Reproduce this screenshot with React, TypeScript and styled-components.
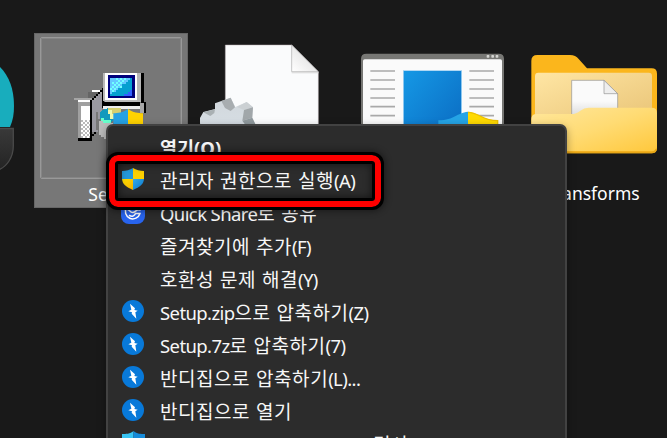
import React from 'react';
import styled, { createGlobalStyle } from 'styled-components';

const GlobalStyle = createGlobalStyle`
  * { box-sizing: border-box; }
  body { margin: 0; background: #191919; overflow: hidden; }
`;

const Desktop = styled.main`
  position: relative;
  width: 667px;
  height: 438px;
  overflow: hidden;
  display: flex;
  align-items: flex-start;
  padding-top: 33px;
  background: #191919;
  font-family: 'Noto Sans', 'Noto Sans CJK KR', sans-serif;
  color: #fff;
`;

const FileTile = styled.div<{ $width: number; $selected?: boolean }>`
  flex: none;
  width: ${p => p.$width}px;
  height: 175px;
  display: flex;
  flex-direction: column;
  align-items: center;
  background: ${p => (p.$selected ? '#777' : 'transparent')};
  border: ${p => (p.$selected ? '1px solid #666' : '0')};
  padding-top: ${p => (p.$selected ? '3px' : '0')};
  margin-right: ${p => (p.$selected ? '2px' : '0')};
  svg { display: block; flex: none; }
`;

const Thumb = styled.div`
  width: 142px;
  height: 142px;
  border: 1px solid #999;
  outline: 1px solid #858585;
  outline-offset: -2px;
  border-radius: 2px;
  padding: 24px 0 0 27px;
`;

const FileName = styled.span<{ $top: number; $shift?: number }>`
  margin-top: ${p => p.$top}px;
  margin-left: ${p => p.$shift ?? 0}px;
  font-size: 17.5px;
  line-height: 24px;
  white-space: nowrap;
`;

const Menu = styled.nav`
  position: absolute;
  left: 106px;
  top: 124px;
  width: 461px;
  height: 360px;
  padding-top: 5px;
  background: #2c2c2c;
  border: 2px solid #424242;
  border-radius: 7px;
  box-shadow: 0 3px 8px rgba(0, 0, 0, 0.35);
`;

const MenuRow = styled.div`
  height: 33.1px;
  display: grid;
  grid-template-columns: 52px 1fr;
  align-items: center;
`;

const MenuIcon = styled.span`
  display: flex;
  justify-content: center;
  width: 24px;
  margin-left: 13px;
  margin-top: -4px;
`;

const MenuLabel = styled.span<{ $bold?: boolean; $indent?: number }>`
  font-size: 18.5px;
  line-height: 32px;
  font-weight: ${p => (p.$bold ? 700 : 400)};
  letter-spacing: ${p => (p.$bold ? 0 : -0.6)}px;
  padding-left: ${p => p.$indent ?? 0}px;
  color: #f7f7f7;
  white-space: nowrap;
`;

const Hangul = styled.span<{ $bold?: boolean }>`
  font-size: ${p => (p.$bold ? 18.5 : 19)}px;
  letter-spacing: ${p => (p.$bold ? 0 : 0.55)}px;
  word-spacing: 0.4px;
`;

const Highlight = styled.div`
  position: absolute;
  left: 1px;
  top: 29px;
  width: 272px;
  height: 52px;
  border: 6px solid #f00;
  border-radius: 9px;
  outline: 3px solid #000;
  box-shadow: inset 0 0 0 3px #000, inset 0 0 9px 3px rgba(0, 0, 0, 0.6), 0 0 7px 4px rgba(0, 0, 0, 0.45);
`;

const Shield = () => (
  <svg width="24" height="24" viewBox="0 0 24 24">
    <defs>
      <linearGradient id="shBlue" x1="0" y1="0" x2="1" y2="1"><stop stopColor="#35aae8" /><stop offset="1" stopColor="#0875cd" /></linearGradient>
      <linearGradient id="shGold" x1="0" y1="0" x2="1" y2="1"><stop stopColor="#ffe000" /><stop offset="1" stopColor="#f6b000" /></linearGradient>
    </defs>
    <path d="M12 1C9 3 5 4 1 4V12H12Z" fill="#2499da" />
    <path d="M12 1C15 3 19 4 23 4V12H12Z" fill="#fdd000" />
    <path d="M1 12C1.4 17 5 20 12 23V12Z" fill="url(#shGold)" />
    <path d="M23 12C22.6 17 19 20 12 23V12Z" fill="url(#shBlue)" />
  </svg>
);

const QuickShare = () => (
  <svg width="24" height="24" viewBox="0 0 24 24">
    <rect width="24" height="24" rx="8" fill="#2864ee" />
    <g fill="none" stroke="#fff" strokeWidth="1.5" strokeLinecap="round">
      <path d="M16.5 5.5A7.5 7.5 0 1 0 19 13.5H14.5" />
      <path d="M5 9C8 8 9 13 12 12.5S15 9 19 10" />
      <path d="M8.5 15.5C11 17 13.5 16 14.5 13.5" />
    </g>
  </svg>
);

const Bolt = () => (
  <svg width="22" height="22" viewBox="0 0 66 66">
    <circle cx="33" cy="33" r="33" fill="#0879d9" />
    <path d="M24 11L39 25L37 30L47 32L40 37L43 56L29 41L30 37L19 34L28 29Z" fill="#fff" />
  </svg>
);

const ScanShield = () => (
  <svg width="23" height="24" viewBox="0 0 23 24">
    <path d="M11.5 0C8 3 4 3 0 3V12C1 18 5 22 11.5 24Z" fill="#38c4f3" />
    <path d="M11.5 0C15 3 19 3 23 3V12C22 18 18 22 11.5 24Z" fill="#168bd9" />
  </svg>
);

const Globe = () => (
  <svg width="34" height="142" viewBox="0 0 34 142">
    <defs><linearGradient id="base" x1="0" y1="0" x2="0" y2="1"><stop stopColor="#393939" /><stop offset="1" stopColor="#242424" /></linearGradient></defs>
    <path d="M0 34C9 43 14 56 14 73C14 81 13 87 10 94H0Z" fill="#18adbd" />
    <path d="M-2 95.5H13.3V113C13.3 124 7 134 -2 137Z" fill="url(#base)" stroke="#4a4a4a" strokeWidth="1.3" />
  </svg>
);

const checker = (x0: number, y0: number, cols: number, rows: number, color: string) =>
  Array.from({ length: cols * rows }, (_, i) => {
    const c = i % cols;
    const r = Math.floor(i / cols);
    return (c + r) % 2 ? null : <rect key={i} x={x0 + c * 6} y={y0 + r * 6} width="6" height="6" fill={color} />;
  });

const SetupIcon = () => (
  <svg width="80" height="80" viewBox="0 0 240 240">
    <g shapeRendering="crispEdges">
      <path d="M18 108H60V90H72V84H102V96H84V114H18Z" fill="#a5a5a5" />
      <path d="M60 90H96V96H84V102H78V108H60Z" fill="#656565" />
      <path d="M72 84H96V90H72Z" fill="#fff" />
      <rect x="30" y="114" width="36" height="6" fill="#fff" />
      <path d="M30 120H66V234H30Z" fill="#a0a0a0" />
      <path d="M39 132H66V229H39Z" fill="#fff" />
      {checker(39, 173, 5, 9, '#b9b9b9')}
      <path d="M72 114H84V102H90V96H102V172H90V210H72Z" fill="#9998a0" />
      <path d="M66 114H72V108H78V102H84V96H90V90H96V84H102V78H108V138H102V90H96V96H90V102H84V108H78V114H72V228H66Z" fill="#000" />
      <path d="M72 216H78V210H84V216H78V222H72V236H30V228H66V216Z" fill="#000" />
      <rect x="84" y="150" width="6" height="54" fill="#777" />
      <rect x="105" y="33" width="5" height="84" fill="#b9b9b9" />
      <rect x="110" y="33" width="97" height="81" fill="#fff" />
      <rect x="207" y="33" width="11" height="86" fill="#b6b6b6" />
      <rect x="110" y="113" width="97" height="7" fill="#bbb" />
      <rect x="218" y="33" width="9" height="89" fill="#000" />
      <rect x="120" y="38" width="80" height="70" fill="#00007c" />
      <rect x="126" y="48" width="66" height="54" fill="#05a0d0" />
      <path d="M126 48H186V54H180V60H174V66H162V72H156V78H150V84H144V90H132V96H126Z" fill="#62c8ff" />
      {checker(144, 48, 5, 2, '#70ffff')}
      {checker(132, 60, 5, 3, '#70ffff')}
      {checker(126, 78, 3, 2, '#70ffff')}
      <path d="M192 84V102H168V96H180V90H186V84Z" fill="#3261ff" />
      <path d="M105 120H216V126H222V120H234V154H228V132H105Z" fill="#000" />
      <rect x="216" y="122" width="12" height="30" fill="#a8a8a8" />
      <path d="M105 132H216V141H105Z" fill="#eee" />
      <path d="M96 150L108 142L124 138H158V170H138L128 184H104L96 168Z" fill="#1299bd" />
      <path d="M120 138H160V158H138V164H132V150H120Z" fill="#d5cf70" />
      <path d="M120 144H132V156H138V170H126V156H120Z" fill="#eff9ad" />
      <path d="M98 168H108V174H130V182H104V176H98Z" fill="#68ffcc" />
      <path d="M92 176H104V184H136V232H108V224H98V218H92Z" fill="#bcbcbc" />
    </g>
    <path d="M180 141C164 153 150 153 136 154V215H180Z" fill="#26a2e4" />
    <path d="M180 141C196 153 210 153 225 154V215H180Z" fill="#ffd200" />
  </svg>
);

const ConfigFile = () => (
  <svg width="160" height="110" viewBox="0 9 480 330">
    <defs>
      <linearGradient id="fold" x1="0" y1="1" x2="1" y2="0"><stop stopColor="#fff" /><stop offset="1" stopColor="#d5d5d5" /></linearGradient>
      <linearGradient id="gear" x1="0" y1="0" x2="0" y2="1"><stop stopColor="#d1d7dc" /><stop offset="1" stopColor="#d9e1e7" /></linearGradient>
    </defs>
    <path d="M106 45H305L385 125V339H106Z" fill="#fafbfc" stroke="#b9aeb0" strokeWidth="1.5" />
    <path d="M305 45L385 125H305Z" fill="url(#fold)" stroke="#aaa" strokeWidth="2" />
    <path d="M305 128H385" stroke="#ddd" strokeWidth="4" />
    <path d="M30 264L40 246L75 237V220L122 203L136 231L170 216L189 232L186 264L200 290V330H42L30 280Z" fill="url(#gear)" />
    <path d="M94 213L122 203L135 232L122 243L105 234Z" fill="#a8adb0" />
    <path d="M40 247L75 238L73 249L61 258Z" fill="#a9b0b3" />
    <path d="M141 231L170 216L189 232L162 240Z" fill="#cbd0d3" />
    <path d="M162 240L189 232L187 263L157 272Z" fill="#a1a7aa" />
    <path d="M157 272L187 263L200 290H170Z" fill="#90999d" />
  </svg>
);

const InstallerWindow = () => (
  <svg width="160" height="110" viewBox="0 -21 480 330">
    <defs>
      <linearGradient id="pane" x1="0" y1="0" x2="1" y2="1"><stop stopColor="#1598e5" /><stop offset="1" stopColor="#0a69c0" /></linearGradient>
    </defs>
    <path d="M33 300V57Q33 41 49 41H446Q462 41 462 57V300Z" fill="#777774" />
    <path d="M39 300V63Q39 58 44 58H451Q456 58 456 63V300Z" fill="#fafafa" />
    {[410, 424, 437].map(x => <rect key={x} x={x} y="45" width="8" height="8" rx="2" fill="#d5d5d2" />)}
    {[93, 120, 147, 174, 200, 227].map(y => <path key={y} d={`M61 ${y}H135M358 ${y}H432`} stroke="#a9a9a9" strokeWidth="5" />)}
    <rect x="159" y="91" width="177" height="210" fill="#8dc7ef" />
    <rect x="162" y="93" width="171" height="210" fill="url(#pane)" />
    <path d="M354 215C320 218 315 240 265 241V300H354Z" fill="#25a4e6" />
    <path d="M354 215C389 218 394 240 444 241V300H354Z" fill="#ffda00" />
    <path d="M354 217C389 218 394 241 443 242V300" fill="none" stroke="#ecc000" strokeWidth="4" />
  </svg>
);

const FolderIcon = () => (
  <svg width="157" height="140" viewBox="-15 -21 471 420">
    <defs>
      <linearGradient id="front" x1="0" y1="0" x2="1" y2="1"><stop stopColor="#ffe79d" /><stop offset=".5" stopColor="#ffdb73" /><stop offset="1" stopColor="#ffc83c" /></linearGradient>
      <linearGradient id="inner" x1="0" y1="0" x2="1" y2="1"><stop stopColor="#ffe6a4" /><stop offset="1" stopColor="#e9c477" /></linearGradient>
      <linearGradient id="paper" x1="0" y1="0" x2="0" y2="1"><stop offset=".6" stopColor="#fafafa" /><stop offset="1" stopColor="#ddd" /></linearGradient>
    </defs>
    <path d="M49 62Q49 45 67 45H165Q182 45 191 57L216 85H410Q426 85 426 101V325Q426 340 410 340H65Q49 340 49 325Z" fill="#fbb61c" />
    <path d="M60 108Q60 98 70 98H401Q411 98 411 108V240H60Z" fill="url(#inner)" />
    <path d="M170 121H267L308 162V225H170Z" fill="url(#paper)" stroke="#929292" strokeWidth="2" />
    <path d="M267 121V161H308Z" fill="#eee" stroke="#929292" strokeWidth="2" />
    <path d="M49 238Q49 222 65 222H168Q184 222 196 212Q207 203 221 203H410Q426 203 426 219V318Q426 334 410 334H65Q49 334 49 318Z" fill="url(#front)" />
    <path d="M53 329Q56 337 66 337H410Q421 337 424 327" fill="none" stroke="#e7a617" strokeWidth="5" />
  </svg>
);

const items: { label: string; icon?: React.ReactNode; bold?: boolean; indent?: number }[] = [
  { label: '열기(O)', bold: true },
  { label: '관리자 권한으로 실행(A)', icon: <Shield /> },
  { label: 'Quick Share로 공유', icon: <QuickShare /> },
  { label: '즐겨찾기에 추가(F)' },
  { label: '호환성 문제 해결(Y)' },
  { label: 'Setup.zip으로 압축하기(Z)', icon: <Bolt /> },
  { label: 'Setup.7z로 압축하기(7)', icon: <Bolt /> },
  { label: '반디집으로 압축하기(L)...', icon: <Bolt /> },
  { label: '반디집으로 열기', icon: <Bolt /> },
  { label: '검사', icon: <ScanShield />, indent: 213 },
];

const mixedScript = (label: string, bold?: boolean) =>
  label
    .split(/([가-힣][가-힣 ]*)/)
    .map((run, i) => (i % 2 ? <Hangul key={i} $bold={bold}>{run}</Hangul> : run));

export default function App() {
  return (
    <>
      <GlobalStyle />
      <Desktop>
        <FileTile $width={34}><Globe /></FileTile>
        <FileTile $width={154} $selected>
          <Thumb><SetupIcon /></Thumb>
          <FileName $top={3} $shift={2}>Setup</FileName>
        </FileTile>
        <FileTile $width={160}><ConfigFile /></FileTile>
        <FileTile $width={160}><InstallerWindow /></FileTile>
        <FileTile $width={157}>
          <FolderIcon />
          <FileName $top={8} $shift={9}>Transforms</FileName>
        </FileTile>
        <Menu>
          {items.map(item => (
            <MenuRow key={item.label}>
              <MenuIcon>{item.icon}</MenuIcon>
              <MenuLabel $bold={item.bold} $indent={item.indent}>{mixedScript(item.label, item.bold)}</MenuLabel>
            </MenuRow>
          ))}
          <Highlight />
        </Menu>
      </Desktop>
    </>
  );
}
